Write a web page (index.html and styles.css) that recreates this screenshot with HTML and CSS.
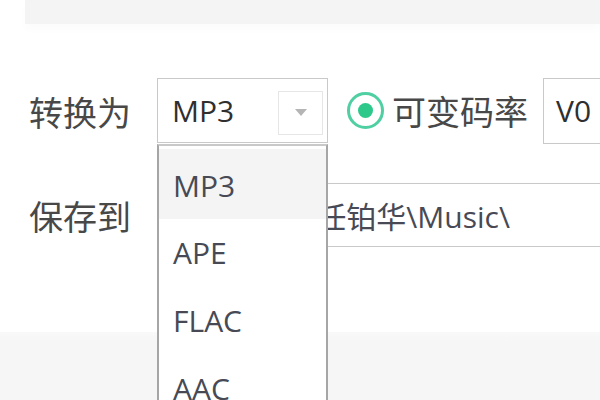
FILE: index.html
```
<!DOCTYPE html>
<html lang="zh-CN">
<head>
<meta charset="utf-8">
<link rel="stylesheet" href="styles.css">
</head>
<body>
<div class="topbar"></div>
<div class="form">
  <div class="row">
    <div class="label">转换为</div>
    <div class="select">
      <span class="select-value">MP3</span>
      <span class="arrow-box"><span class="arrow"></span></span>
      <ul class="dropdown">
        <li class="item active">MP3</li>
        <li class="item">APE</li>
        <li class="item">FLAC</li>
        <li class="item">AAC</li>
      </ul>
    </div>
    <div class="radio"><span class="dot"></span></div>
    <div class="radio-label">可变码率</div>
    <div class="vbox">V0</div>
  </div>
  <div class="row row2">
    <div class="label">保存到</div>
    <div class="path">C:\Users\任铂华\Music\</div>
  </div>
</div>
<div class="footer"></div>
</body>
</html>
```
FILE: styles.css
```
html, body {
  margin: 0;
  padding: 0;
  width: 600px;
  height: 400px;
  overflow: hidden;
  background: #ffffff;
  font-family: "Open Sans", "Noto Sans CJK SC", sans-serif;
}
.topbar {
  height: 24px;
  margin-left: 25px;
  background: #f4f4f4;
  box-shadow: 0 6px 8px rgba(0,0,0,0.015);
}
.form {
  margin-top: 54px;
  padding-left: 29px;
}
.row {
  display: flex;
  align-items: center;
  height: 65px;
}
.row2 {
  margin-top: 40px;
  height: 64px;
}
.label {
  width: 128px;
  flex: none;
  font-family: "Noto Sans CJK SC", sans-serif;
  font-size: 34px;
  color: #484848;
  line-height: 1;
  margin-top: 2px;
}
.select {
  position: relative;
  box-sizing: border-box;
  width: 171px;
  height: 65px;
  border: 1px solid #c9c9c9;
  display: flex;
  align-items: center;
  padding-left: 14px;
  flex: none;
}
.select-value {
  font-size: 30px;
  color: #2f2f2f;
  flex: 1;
  line-height: 1;
}
.arrow-box {
  box-sizing: border-box;
  width: 45px;
  height: 44px;
  margin-right: 4px;
  margin-top: 4px;
  border: 1px solid #e6e6e6;
  display: flex;
  align-items: center;
  justify-content: center;
}
.arrow {
  width: 0;
  height: 0;
  border-left: 6px solid transparent;
  border-right: 6px solid transparent;
  border-top: 7px solid #b5b5b5;
}
.dropdown {
  position: absolute;
  left: -1px;
  top: 65px;
  width: 171px;
  height: 256px;
  box-sizing: border-box;
  margin: 0;
  padding: 3px 0 0;
  list-style: none;
  background: #fff;
  border: 2px solid #a6a6a6;
  border-top-color: #c9c9c9;
  border-bottom: none;
  overflow: hidden;
  z-index: 5;
}
.item {
  height: 68px;
  line-height: 68px;
  padding-left: 14px;
  font-size: 30px;
  color: #474a55;
}
.item.active {
  background: #f4f4f4;
  height: 70px;
  line-height: 74px;
}
.radio {
  margin-left: 19px;
  width: 37px;
  height: 37px;
  box-sizing: border-box;
  border: 3px solid #4fcfa2;
  border-radius: 50%;
  display: flex;
  align-items: center;
  justify-content: center;
  flex: none;
}
.dot {
  width: 15px;
  height: 15px;
  border-radius: 50%;
  background: #2ec98a;
}
.radio-label {
  margin-left: 8px;
  font-family: "Noto Sans CJK SC", sans-serif;
  font-size: 34px;
  color: #484848;
  line-height: 1;
  flex: none;
}
.vbox {
  margin-left: 15px;
  box-sizing: border-box;
  height: 66px;
  flex: 1;
  border: 1px solid #c9c9c9;
  border-right: none;
  display: flex;
  align-items: center;
  padding-left: 12px;
  font-size: 30px;
  color: #2f2f2f;
  overflow: hidden;
}
.path {
  box-sizing: border-box;
  height: 64px;
  flex: 1;
  border: 1px solid #c9c9c9;
  border-right: none;
  display: flex;
  align-items: center;
  padding-left: 30px;
  font-size: 30px;
  color: #474a55;
  white-space: nowrap;
  overflow: hidden;
  font-family: "Open Sans", "Noto Sans CJK SC", sans-serif;
}
.footer {
  margin-top: 85px;
  height: 68px;
  background: linear-gradient(#f9f9f9, #f6f6f6 10px);
}
```
